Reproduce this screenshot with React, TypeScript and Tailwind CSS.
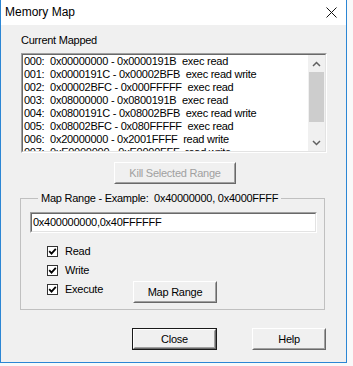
import React from 'react';

const rows = [
  '000:  0x00000000 - 0x0000191B  exec read',
  '001:  0x0000191C - 0x00002BFB  exec read write',
  '002:  0x00002BFC - 0x000FFFFF  exec read',
  '003:  0x08000000 - 0x0800191B  exec read',
  '004:  0x0800191C - 0x08002BFB  exec read write',
  '005:  0x08002BFC - 0x080FFFFF  exec read',
  '006:  0x20000000 - 0x2001FFFF  read write',
  '007:  0xE0000000 - 0xE0000FFF  read write',
];

const Button: React.FC<{ label: string; width: string; disabled?: boolean; isDefault?: boolean }> = ({
  label,
  width,
  disabled,
  isDefault,
}) => (
  <div className={`${width} h-[22px] ${isDefault ? 'border border-[#1a1a1a]' : ''}`}>
    <div className="w-full h-full border border-t-white border-l-white border-r-[#696969] border-b-[#696969]">
      <div
        className={`w-full h-full flex items-center justify-center bg-[#f0f0f0] border border-t-[#f0f0f0] border-l-[#f0f0f0] border-r-[#a0a0a0] border-b-[#a0a0a0] ${
          disabled ? 'text-[#a0a0a0]' : 'text-black'
        }`}
      >
        {label}
      </div>
    </div>
  </div>
);

const Sunken: React.FC<{ className: string; children: React.ReactNode }> = ({ className, children }) => (
  <div className={`${className} border border-t-[#a0a0a0] border-l-[#a0a0a0] border-r-white border-b-white`}>
    <div className="w-full h-full border border-t-[#696969] border-l-[#696969] border-r-[#e3e3e3] border-b-[#e3e3e3] bg-white">
      {children}
    </div>
  </div>
);

const Check: React.FC<{ label: string }> = ({ label }) => (
  <div className="flex items-center h-[19px]">
    <div className="w-[11px] h-[11px] border border-[#333] bg-white flex items-center justify-center">
      <svg width="9" height="9" viewBox="0 0 9 9">
        <path d="M1.2 4.2 L3.5 6.6 L7.8 1.8" fill="none" stroke="#000" strokeWidth="1.8" />
      </svg>
    </div>
    <span className="ml-[7px]">{label}</span>
  </div>
);

export default function App() {
  return (
    <div
      className="w-[353px] h-[366px] bg-[#f9f9f9] text-[11px] leading-[13px] tracking-[-0.25px] text-black"
      style={{ fontFamily: '"Liberation Sans", Arial, sans-serif' }}
    >
      <div className="w-[347px] h-[363px] border-x border-b border-[#2b86d4] bg-[#f0f0f0] flex flex-col">
        <div className="h-[25px] bg-white flex items-center justify-between pl-[4px] pr-[9px]">
          <span className="text-[12px] tracking-normal">Memory Map</span>
          <svg width="11" height="11" viewBox="0 0 11 11">
            <path d="M0.5 0.5 L10.5 10.5 M10.5 0.5 L0.5 10.5" stroke="#111" strokeWidth="1" />
          </svg>
        </div>

        <div className="pl-[20px] pt-[9px] flex flex-col">
          <div>Current Mapped</div>

          <Sunken className="mt-[6px] w-[306px] h-[100px]">
            <div className="flex h-full">
              <div className="flex-1 overflow-hidden pl-[1px]">
                {rows.map(r => (
                  <div key={r} className="whitespace-pre h-[13px]">
                    {r}
                  </div>
                ))}
              </div>
              <div className="w-[17px] h-full bg-[#f0f0f0] flex flex-col items-center">
                <div className="h-[17px] flex items-center justify-center">
                  <svg width="9" height="6" viewBox="0 0 9 6">
                    <path d="M1 5 L4.5 1.5 L8 5" fill="none" stroke="#606060" strokeWidth="1.5" />
                  </svg>
                </div>
                <div className="w-[15px] h-[50px] bg-[#cdcdcd]" />
                <div className="flex-1" />
                <div className="h-[17px] flex items-center justify-center">
                  <svg width="9" height="6" viewBox="0 0 9 6">
                    <path d="M1 1 L4.5 4.5 L8 1" fill="none" stroke="#606060" strokeWidth="1.5" />
                  </svg>
                </div>
              </div>
            </div>
          </Sunken>

          <div className="mt-[9px] ml-[93px]">
            <Button label="Kill Selected Range" width="w-[122px]" disabled />
          </div>

          <fieldset className="mt-[8px] -ml-[1px] w-[305px] border border-[#c0c0c0] pl-[9px] pr-[7px] pb-[6px]">
            <legend className="ml-[8px] px-[3px]">Map Range - Example:&nbsp;&nbsp;0x40000000, 0x4000FFFF</legend>
            <Sunken className="mt-[7px] w-[287px] h-[21px]">
              <div className="pl-[1px] pt-[2px]">0x400000000,0x40FFFFFF</div>
            </Sunken>
            <div className="mt-[9px] pl-[17px]">
              <Check label="Read" />
              <Check label="Write" />
              <div className="flex items-start">
                <div className="w-[86px]">
                  <Check label="Execute" />
                </div>
                <div className="mt-[1px]">
                  <Button label="Map Range" width="w-[84px]" />
                </div>
              </div>
            </div>
          </fieldset>

          <div className="mt-[18px] flex">
            <div className="ml-[111px]">
              <Button label="Close" width="w-[85px]" isDefault />
            </div>
            <div className="ml-[35px]">
              <Button label="Help" width="w-[74px]" />
            </div>
          </div>
        </div>
      </div>
    </div>
  );
}
